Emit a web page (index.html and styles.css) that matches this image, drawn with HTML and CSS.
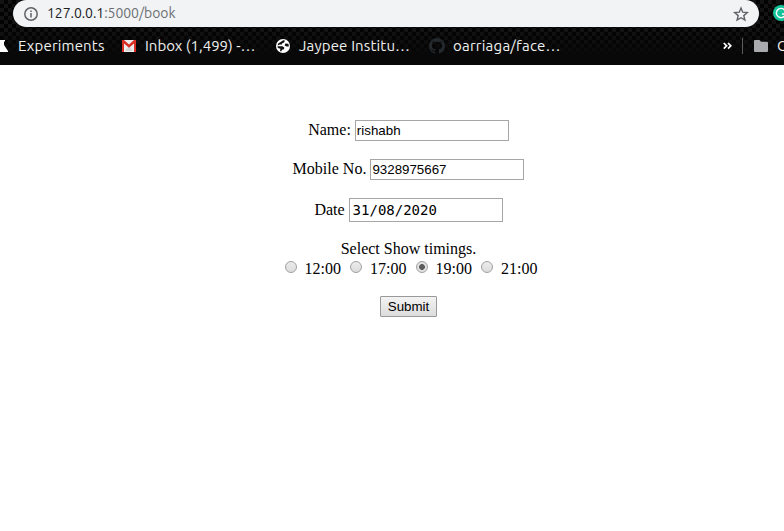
FILE: index.html
```html
<!DOCTYPE html>
<html lang="en">
<head>
<meta charset="utf-8">
<title>Book</title>
<link rel="stylesheet" href="styles.css">
</head>
<body>
<header class="chrome">
  <div class="toolbar">
    <div class="omnibox">
      <svg class="info" width="14" height="14" viewBox="0 0 14 14" fill="none" stroke="#5f6368" stroke-width="1.5"><circle cx="7" cy="7" r="6.2"/><path d="M7 6v4.4M7 3.4v1.5"/></svg>
      <span class="url"><b>127.0.0.1</b>:5000/book</span>
      <svg class="star" width="16" height="16" viewBox="0 0 16 16" fill="none" stroke="#5f6368" stroke-width="1.4"><path d="M8 2l1.7 4.2 4.6.4-3.5 3 1.1 4.5L8 11.7l-3.9 2.4 1.1-4.5-3.5-3 4.6-.4z"/></svg>
    </div>
    <svg class="extension" width="16" height="16" viewBox="0 0 16 16"><circle cx="8" cy="8" r="8" fill="#15c39a"/><path d="M11.5 5A4.6 4.6 0 1 0 12.5 9H9" fill="none" stroke="#fff" stroke-width="1.4"/></svg>
  </div>
  <nav class="bookmarks">
    <svg class="flask" width="8" height="14" viewBox="0 0 8 14" fill="#fff"><path d="M0 1h5v1.5H4V6l4 6v1H0z"/></svg>
    <span class="label experiments">Experiments</span>
    <svg class="gmail" width="14" height="12" viewBox="0 0 14 12"><path fill="#eee" d="M0 0h14v12H0z"/><path fill="#d5d5d5" d="M3 11l4-5 4 5z"/><path fill="#d93025" d="M0 0h2l5 4.6L12 0h2v12h-2V3.6L7 7.8 2 3.6V12H0z"/></svg>
    <span class="label inbox">Inbox (1,499) -…</span>
    <svg class="globe" width="14" height="14" viewBox="0 0 14 14"><circle cx="7" cy="7" r="7" fill="#fff"/><path fill="#111" d="M7.2 1.3L9 1.6 8 3.6 6 4.4v1H3.8L1.6 6.6 2.2 4.4 4.6 3zM1.5 7.2h5l1.8 1.3-.3 1.7-2 .6-.8 1.7-1.2-.5.4-2.2L1.9 9zM9.4 4.6l3 .2.5 2.6-2.3.2-2-1z"/></svg>
    <span class="label jaypee">Jaypee Institu…</span>
    <svg class="github" width="16" height="16" viewBox="0 0 16 16" fill="#24292e"><path d="M8 0C3.58 0 0 3.58 0 8c0 3.54 2.29 6.53 5.47 7.59.4.07.55-.17.55-.38v-1.49c-2.23.48-2.7-.94-2.7-.94-.36-.92-.89-1.17-.89-1.17-.73-.5.05-.49.05-.49.81.06 1.24.83 1.24.83.72 1.23 1.88.87 2.34.67.07-.52.28-.88.5-1.08-1.78-.2-3.64-.89-3.64-3.95 0-.87.31-1.59.82-2.15-.08-.2-.36-1.01.08-2.12 0 0 .67-.21 2.2.82a7.6 7.6 0 0 1 4 0c1.53-1.04 2.2-.82 2.2-.82.44 1.11.16 1.92.08 2.12.51.56.82 1.28.82 2.15 0 3.07-1.87 3.75-3.65 3.95.29.25.54.73.54 1.48v2.19c0 .21.15.46.55.38A8 8 0 0 0 8 0z"/></svg>
    <span class="label oarriaga">oarriaga/face…</span>
    <svg class="more" width="9" height="8" viewBox="0 0 9 8" fill="none" stroke="#fff" stroke-width="1.7"><path d="M.8 1l2.8 2.8L.8 6.6M5 1l2.8 2.8L5 6.6"/></svg>
    <span class="divider"></span>
    <svg class="folder" width="14" height="12" viewBox="0 0 14 12" fill="#a9abae"><path d="M1 0h4.5L7 1.7h6a1 1 0 0 1 1 1V11a1 1 0 0 1-1 1H1a1 1 0 0 1-1-1V1a1 1 0 0 1 1-1z"/></svg>
    <span class="label other">O</span>
  </nav>
</header>
<form class="booking">
  <label class="row"><span>Name:</span><input type="text" value="rishabh"></label>
  <label class="row"><span>Mobile No.</span><input type="text" value="9328975667"></label>
  <label class="row date-row"><span>Date</span><input class="date" type="text" value="31/08/2020"></label>
  <div class="heading">Select Show timings.</div>
  <div class="times">
    <label><input type="radio" name="time">12:00</label>
    <label><input type="radio" name="time">17:00</label>
    <label><input type="radio" name="time" checked>19:00</label>
    <label><input type="radio" name="time">21:00</label>
  </div>
  <button type="button">Submit</button>
</form>
</body>
</html>
```
FILE: styles.css
```css
* { box-sizing: border-box; }
body { margin: 0; background: #fff; overflow: hidden; font: 16px/18px "Liberation Serif", serif; color: #000; }
svg { display: block; flex: none; }
.chrome {
  height: 65px;
  overflow: hidden;
  background:
    linear-gradient(transparent 28px, #080808 56px),
    repeating-conic-gradient(#030303 0 25%, #131313 0 50%) 0 0 / 8px 8px;
  font-family: Ubuntu, "Noto Sans", sans-serif;
}
.toolbar { display: flex; height: 27px; }
.omnibox { display: flex; align-items: center; flex: none; width: 746px; height: 27px; margin-left: 13px; padding: 0 10px 0 11px; background: #f1f3f4; border-radius: 14px; }
.url { margin: -2px 0 0 9px; font-size: 14px; letter-spacing: -0.06px; color: #6c7074; white-space: nowrap; }
.url b { font-weight: 400; color: #202124; }
.star { margin-left: auto; }
.extension { margin: 5px 0 0 14px; }
.bookmarks { display: flex; align-items: center; height: 38px; white-space: nowrap; }
.label { flex: none; font-size: 15px; line-height: 20px; color: #f0f0f0; }
.experiments { width: 87px; margin-left: 10px; letter-spacing: 0.17px; }
.gmail { margin-left: 17px; }
.inbox { width: 111px; margin-left: 9px; }
.globe { margin-left: 20px; }
.jaypee { width: 111px; margin-left: 9px; letter-spacing: 0.15px; }
.github { margin-left: 19px; }
.oarriaga { width: 109px; margin-left: 8px; letter-spacing: 0.22px; }
.more { margin-left: 161px; }
.divider { flex: none; width: 1px; height: 16px; margin-left: 10px; background: #5c5c5c; }
.folder { margin-left: 11px; }
.other { margin-left: 9px; }
.booking { display: flex; flex-direction: column; align-items: center; padding: 55px 0 0 33px; }
.row { display: flex; align-items: center; gap: 4px; margin-bottom: 18px; white-space: nowrap; }
.row span { padding-bottom: 2px; }
.date-row span { padding-bottom: 0; }
.row input { width: 154px; height: 21px; margin: 0; padding: 0 1px; border: 1px solid #a6a6a6; background: #fff; font: 13.333px "Liberation Sans", sans-serif; color: #000; }
.row .date { height: 24px; padding-left: 3px; font: 14px "DejaVu Sans Mono", monospace; }
.heading { line-height: 18px; }
.times { display: flex; gap: 9px; height: 20px; margin-bottom: 18px; padding-left: 5px; line-height: 22px; }
.times label { display: flex; }
.times input { appearance: none; width: 12px; height: 12px; margin: 3px 8px 0 0; border: 1px solid #a0a0a0; border-radius: 50%; background: linear-gradient(#ececec, #dcdcdc); }
.times input:checked { background: radial-gradient(circle, #5c5c5c 0 2.6px, #e2e2e2 3.2px); }
button { width: 57px; height: 21px; padding: 0; border: 1px solid #999; border-radius: 1px; background: linear-gradient(#f3f3f3, #dcdcdc); font: 13.333px "Liberation Sans", sans-serif; color: #000; }
```
